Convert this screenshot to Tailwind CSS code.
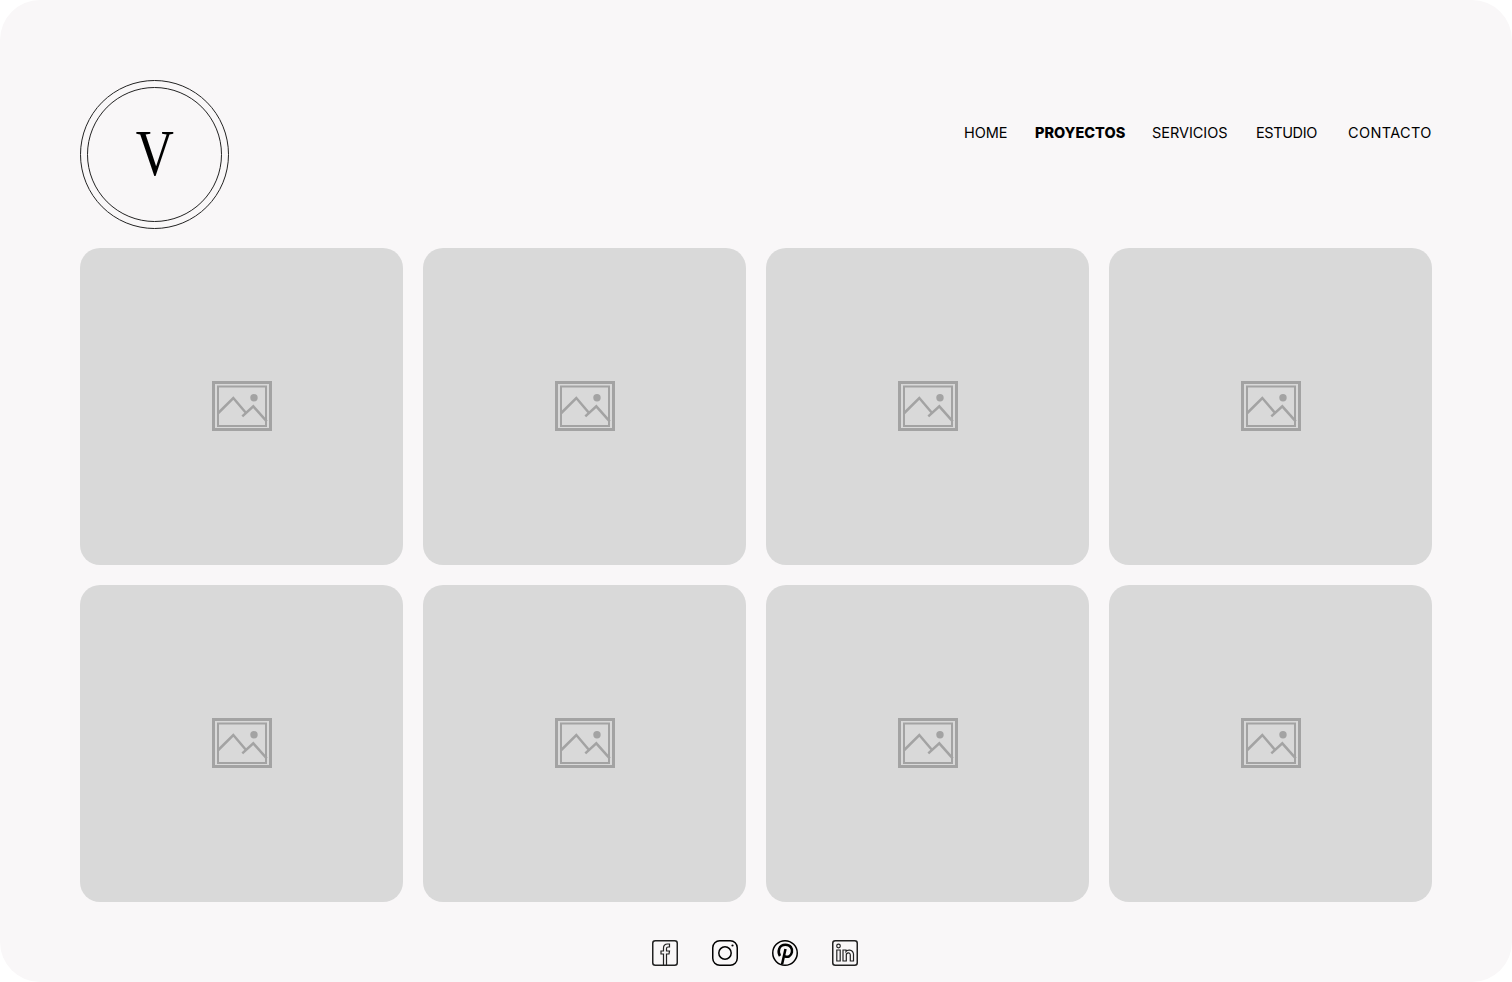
<!DOCTYPE html>
<html lang="en">
<head>
  <meta charset="UTF-8">
  <meta name="viewport" content="width=device-width, initial-scale=1.0">
  <title>Proyectos</title>
  <script src="https://cdn.jsdelivr.net/npm/@tailwindcss/browser@4"></script>
</head>
<body class="bg-white h-[982px] overflow-hidden font-['Inter',sans-serif] text-black">
  <div class="h-[982px] bg-[#f9f7f8] rounded-[40px] px-20 pt-20">

    <!-- header -->
    <header class="flex justify-between items-start h-[148px] mb-5">
      <div class="w-[149px] h-[149px] shrink-0 rounded-full border border-[#222] flex items-center justify-center">
        <div class="w-[135px] h-[135px] rounded-full border border-[#222] flex items-center justify-center">
          <span class="font-['Liberation_Serif',serif] text-[66px] leading-none scale-x-[0.8] -translate-y-[2px]">V</span>
        </div>
      </div>
      <nav class="flex items-center h-6 mt-[41px] text-[14.5px] whitespace-nowrap">
        <a class="w-[43px] tracking-[-0.1px]">HOME</a>
        <a class="w-[90px] ml-[28px] font-extrabold">PROYECTOS</a>
        <a class="w-[75px] ml-[27px] tracking-[-0.05px]">SERVICIOS</a>
        <a class="w-[61px] ml-[29px] tracking-[-0.4px]">ESTUDIO</a>
        <a class="w-[84px] ml-[31px] tracking-[0.35px]">CONTACTO</a>
      </nav>
    </header>

    <!-- projects -->
    <main class="grid grid-cols-4 grid-rows-[317px_317px] gap-5">
      <div class="bg-[#d9d9d9] rounded-[20px] flex items-center justify-center pb-[2px]">
        <svg width="60" height="50" viewBox="0 0 60 50" fill="none" stroke="#a3a3a3"><rect x="1.500" y="1.500" width="57" height="47" stroke-width="3"/><rect x="6" y="5.500" width="48" height="39.500" stroke-width="2"/><path d="M6.300 32 21.300 17 34.700 32.700M30.300 35.300 41.300 25.300 54.700 40.300" stroke-width="2.500"/><circle cx="42" cy="16.700" r="3.700" fill="#a3a3a3" stroke="none"/></svg>
      </div>
      <div class="bg-[#d9d9d9] rounded-[20px] flex items-center justify-center pb-[2px]">
        <svg width="60" height="50" viewBox="0 0 60 50" fill="none" stroke="#a3a3a3"><rect x="1.500" y="1.500" width="57" height="47" stroke-width="3"/><rect x="6" y="5.500" width="48" height="39.500" stroke-width="2"/><path d="M6.300 32 21.300 17 34.700 32.700M30.300 35.300 41.300 25.300 54.700 40.300" stroke-width="2.500"/><circle cx="42" cy="16.700" r="3.700" fill="#a3a3a3" stroke="none"/></svg>
      </div>
      <div class="bg-[#d9d9d9] rounded-[20px] flex items-center justify-center pb-[2px]">
        <svg width="60" height="50" viewBox="0 0 60 50" fill="none" stroke="#a3a3a3"><rect x="1.500" y="1.500" width="57" height="47" stroke-width="3"/><rect x="6" y="5.500" width="48" height="39.500" stroke-width="2"/><path d="M6.300 32 21.300 17 34.700 32.700M30.300 35.300 41.300 25.300 54.700 40.300" stroke-width="2.500"/><circle cx="42" cy="16.700" r="3.700" fill="#a3a3a3" stroke="none"/></svg>
      </div>
      <div class="bg-[#d9d9d9] rounded-[20px] flex items-center justify-center pb-[2px]">
        <svg width="60" height="50" viewBox="0 0 60 50" fill="none" stroke="#a3a3a3"><rect x="1.500" y="1.500" width="57" height="47" stroke-width="3"/><rect x="6" y="5.500" width="48" height="39.500" stroke-width="2"/><path d="M6.300 32 21.300 17 34.700 32.700M30.300 35.300 41.300 25.300 54.700 40.300" stroke-width="2.500"/><circle cx="42" cy="16.700" r="3.700" fill="#a3a3a3" stroke="none"/></svg>
      </div>
      <div class="bg-[#d9d9d9] rounded-[20px] flex items-center justify-center pb-[2px]">
        <svg width="60" height="50" viewBox="0 0 60 50" fill="none" stroke="#a3a3a3"><rect x="1.500" y="1.500" width="57" height="47" stroke-width="3"/><rect x="6" y="5.500" width="48" height="39.500" stroke-width="2"/><path d="M6.300 32 21.300 17 34.700 32.700M30.300 35.300 41.300 25.300 54.700 40.300" stroke-width="2.500"/><circle cx="42" cy="16.700" r="3.700" fill="#a3a3a3" stroke="none"/></svg>
      </div>
      <div class="bg-[#d9d9d9] rounded-[20px] flex items-center justify-center pb-[2px]">
        <svg width="60" height="50" viewBox="0 0 60 50" fill="none" stroke="#a3a3a3"><rect x="1.500" y="1.500" width="57" height="47" stroke-width="3"/><rect x="6" y="5.500" width="48" height="39.500" stroke-width="2"/><path d="M6.300 32 21.300 17 34.700 32.700M30.300 35.300 41.300 25.300 54.700 40.300" stroke-width="2.500"/><circle cx="42" cy="16.700" r="3.700" fill="#a3a3a3" stroke="none"/></svg>
      </div>
      <div class="bg-[#d9d9d9] rounded-[20px] flex items-center justify-center pb-[2px]">
        <svg width="60" height="50" viewBox="0 0 60 50" fill="none" stroke="#a3a3a3"><rect x="1.500" y="1.500" width="57" height="47" stroke-width="3"/><rect x="6" y="5.500" width="48" height="39.500" stroke-width="2"/><path d="M6.300 32 21.300 17 34.700 32.700M30.300 35.300 41.300 25.300 54.700 40.300" stroke-width="2.500"/><circle cx="42" cy="16.700" r="3.700" fill="#a3a3a3" stroke="none"/></svg>
      </div>
      <div class="bg-[#d9d9d9] rounded-[20px] flex items-center justify-center pb-[2px]">
        <svg width="60" height="50" viewBox="0 0 60 50" fill="none" stroke="#a3a3a3"><rect x="1.500" y="1.500" width="57" height="47" stroke-width="3"/><rect x="6" y="5.500" width="48" height="39.500" stroke-width="2"/><path d="M6.300 32 21.300 17 34.700 32.700M30.300 35.300 41.300 25.300 54.700 40.300" stroke-width="2.500"/><circle cx="42" cy="16.700" r="3.700" fill="#a3a3a3" stroke="none"/></svg>
      </div>
    </main>

    <!-- social -->
    <footer class="flex justify-center gap-[34px] mt-[38px] pr-[2px]">
      <svg width="26" height="26" viewBox="0 0 26 26" fill="none" stroke="#222" stroke-width="1.200"><rect x=".75" y=".75" width="24.500" height="24.500" rx="2.500" stroke-width="1.500"/><path d="M11.500 25V14H9v-3h2.500V8c0-2.500 1.500-4 4-4h2v3h-1.500c-1 0-1.500.5-1.500 1.500V11h3l-.5 3h-2.500v11"/></svg>
      <svg width="26" height="26" viewBox="0 0 26 26" fill="none" stroke="#000" stroke-width="1.500"><rect x=".75" y=".75" width="24.500" height="24.500" rx="7"/><circle cx="13" cy="13" r="6.200"/><circle cx="20.500" cy="5.500" r="1.100" fill="#000" stroke="none"/></svg>
      <svg width="26" height="26" viewBox="0 0 26 26" fill="none" stroke="#000" stroke-width="1.500"><circle cx="13" cy="13" r="12.250"/><path d="M8 16C5.500 12 6.500 4.800 13.500 4.800c5 0 7.200 3.700 6.400 7.500-.8 3.700-4.200 5.700-7.200 3.800M13.500 9 10 24.500" stroke-width="2.500"/></svg>
      <svg width="26" height="26" viewBox="0 0 26 26" fill="none" stroke="#222" stroke-width="1.200"><rect x=".75" y=".75" width="24.500" height="24.500" rx="2.500" stroke-width="1.500"/><circle cx="6.500" cy="6" r="1.800"/><path d="M4.800 10h3.400v11H4.800zM11 10h3v1.500c1-1.500 6.500-2.800 7.500 2.500v7h-3.200v-6c0-3-4-2.800-4 0v6H11z"/></svg>
    </footer>
  </div>
</body>
</html>
